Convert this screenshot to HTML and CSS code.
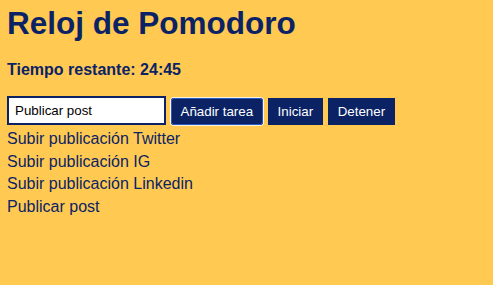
FILE: index.html
```html
<!DOCTYPE html>
<html lang="es">
<head>
  <meta charset="UTF-8">
  <meta name="viewport" content="width=device-width, initial-scale=1.0">
  <title>Reloj de Pomodoro</title>
  <link rel="stylesheet" href="styles.css">
</head>
<body>
  <div class="app">
    <h1>Reloj de Pomodoro</h1>

    <p class="timer">Tiempo restante: <span id="time">24:45</span></p>

    <div class="controls">
      <input type="text" id="task-input" class="task-input" value="Publicar post">
      <button class="btn focused">Añadir tarea</button>
      <button class="btn">Iniciar</button>
      <button class="btn">Detener</button>
    </div>

    <!-- Task list -->
    <ul class="task-list">
      <li>Subir publicación Twitter</li>
      <li>Subir publicación IG</li>
      <li>Subir publicación Linkedin</li>
      <li>Publicar post</li>
    </ul>
  </div>
</body>
</html>
```

FILE: styles.css
```css
/* Pomodoro clock */
body {
  font-family: 'Liberation Sans', Arial, sans-serif;
  margin: 0;
  background: #ffc952;
  color: #0b2365;
  min-height: 100vh;
}

.app {
  padding: 0 7px;
}

h1 {
  font-size: 31.5px;
  font-weight: bold;
  margin: 5px 0 0;
}

.timer {
  font-size: 16px;
  font-weight: bold;
  margin: 19px 0 0;
}

.controls {
  display: flex;
  align-items: flex-end;
  gap: 4.5px;
  margin-top: 17px;
}

.task-input {
  width: 159px;
  height: 29px;
  box-sizing: border-box;
  border: 2px solid #0b2365;
  padding: 0 6px;
  background: #fff;
  color: #000;
  font-family: 'Liberation Sans', Arial, sans-serif;
  font-size: 13.33px;
  outline: none;
}

.btn {
  height: 27px;
  padding: 0 10px;
  border: none;
  background: #0b2365;
  color: #fff;
  font-family: 'Liberation Sans', Arial, sans-serif;
  font-size: 13.33px;
  cursor: pointer;
}

.btn.focused {
  border-radius: 3px;
  box-shadow: inset 0 0 0 1px #2a57c8, 0 0 0 1px #fff4d6;
}

.task-list {
  list-style: none;
  margin: 3px 0 0;
  padding: 0;
  font-size: 16px;
  line-height: 22.7px;
}
```
